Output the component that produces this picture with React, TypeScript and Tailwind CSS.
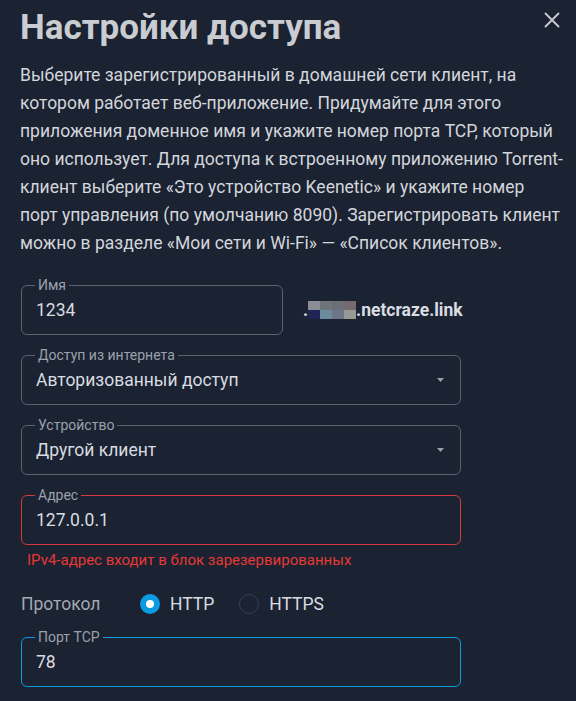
import React from "react";

const lines = [
  "Выберите зарегистрированный в домашней сети клиент, на",
  "котором работает веб-приложение. Придумайте для этого",
  "приложения доменное имя и укажите номер порта TCP, который",
  "оно использует. Для доступа к встроенному приложению Torrent-",
  "клиент выберите «Это устройство Keenetic» и укажите номер",
  "порт управления (по умолчанию 8090). Зарегистрировать клиент",
  "можно в разделе «Мои сети и Wi-Fi» — «Список клиентов».",
];

function Field({
  label,
  value,
  border,
  select,
  className,
}: {
  label: string;
  value: string;
  border: string;
  select?: boolean;
  className?: string;
}) {
  return (
    <div
      className={`relative flex h-[50px] items-center rounded-[6px] border pl-[14px] pr-[16px] ${border} ${className ?? ""}`}
    >
      {/* outlined label sits on the border */}
      <span className="absolute left-[13px] top-[-8px] bg-[#1b2232] px-[3px] text-[14px] leading-[14px] text-[#9aa1ab]">
        {label}
      </span>
      <span className="flex-1 text-[17.5px] text-[#d9dce1]">{value}</span>
      {select && (
        <svg width="7" height="4" viewBox="0 0 7 4">
          <path d="M0 0 L7 0 L3.5 4 Z" fill="#9aa1ab" />
        </svg>
      )}
    </div>
  );
}

export default function App() {
  return (
    <div
      className="relative h-[701px] w-[576px] overflow-hidden bg-[#1b2232] px-[20px] pt-[8px]"
      style={{ fontFamily: "Roboto, 'Noto Sans', sans-serif" }}
    >
      {/* Close button */}
      <button className="absolute right-[14px] top-[10px] flex h-[20px] w-[20px] items-center justify-center">
        <svg width="16" height="16" viewBox="0 0 16 16">
          <path
            d="M1.5 1.5 L14.5 14.5 M14.5 1.5 L1.5 14.5"
            stroke="#c9cdd3"
            strokeWidth="1.8"
            strokeLinecap="round"
          />
        </svg>
      </button>

      <h1 className="m-0 text-[35px] font-bold leading-[40px] text-[#c9ccd1]">
        Настройки доступа
      </h1>

      <p className="mt-[13px] text-[17.5px] leading-[28px] text-[#d3d6db]">
        {lines.map((l, i) => (
          <span key={i} className="block whitespace-nowrap">
            {l}
          </span>
        ))}
      </p>

      <div className="mt-[28px] flex flex-col gap-[20px] pl-[1px]">
        <div className="flex items-center">
          <Field
            label="Имя"
            value="1234"
            border="border-[#5a6270]"
            className="w-[262px]"
          />
          <div className="ml-[20px] flex items-center text-[17.5px] font-bold text-[#d9dce1]">
            <span>.</span>
            <span className="grid h-[18px] w-[48px] grid-cols-4 grid-rows-2">
              <span className="bg-[#8a8e94]" />
              <span className="bg-[#6f737a]" />
              <span className="bg-[#6c6f77]" />
              <span className="bg-[#756a6d]" />
              <span className="bg-[#1e2455]" />
              <span className="bg-[#6a8a9e]" />
              <span className="bg-[#707487]" />
              <span className="bg-[#979994]" />
            </span>
            <span>.netcraze.link</span>
          </div>
        </div>

        <Field
          label="Доступ из интернета"
          value="Авторизованный доступ"
          border="border-[#5a6270]"
          select
          className="w-[440px]"
        />

        <Field
          label="Устройство"
          value="Другой клиент"
          border="border-[#5a6270]"
          select
          className="w-[440px]"
        />

        <div className="flex flex-col">
          <Field
            label="Адрес"
            value="127.0.0.1"
            border="border-[#d63a3a]"
            className="w-[440px]"
          />
          <div className="mt-[5px] pl-[6px] text-[15px] leading-[20px] text-[#e53935]">
            IPv4-адрес входит в блок зарезервированных
          </div>
        </div>
      </div>

      <div className="mt-[22px] flex h-[24px] items-center pl-[1px] text-[17.5px]">
        <span className="w-[119px] text-[#a3a9b2]">Протокол</span>
        <label className="flex items-center">
          <span className="flex h-[20px] w-[20px] items-center justify-center rounded-full bg-[#0a9be3]">
            <span className="h-[8px] w-[8px] rounded-full bg-white" />
          </span>
          <span className="ml-[10px] text-[#d9dce1]">HTTP</span>
        </label>
        <label className="ml-[25px] flex items-center">
          <span className="h-[20px] w-[20px] rounded-full border-[1.5px] border-[#34405a]" />
          <span className="ml-[10px] text-[#d9dce1]">HTTPS</span>
        </label>
      </div>

      <div className="mt-[21px] pl-[1px]">
        <Field
          label="Порт TCP"
          value="78"
          border="border-[#0a9be3]"
          className="w-[440px]"
        />
      </div>
    </div>
  );
}
